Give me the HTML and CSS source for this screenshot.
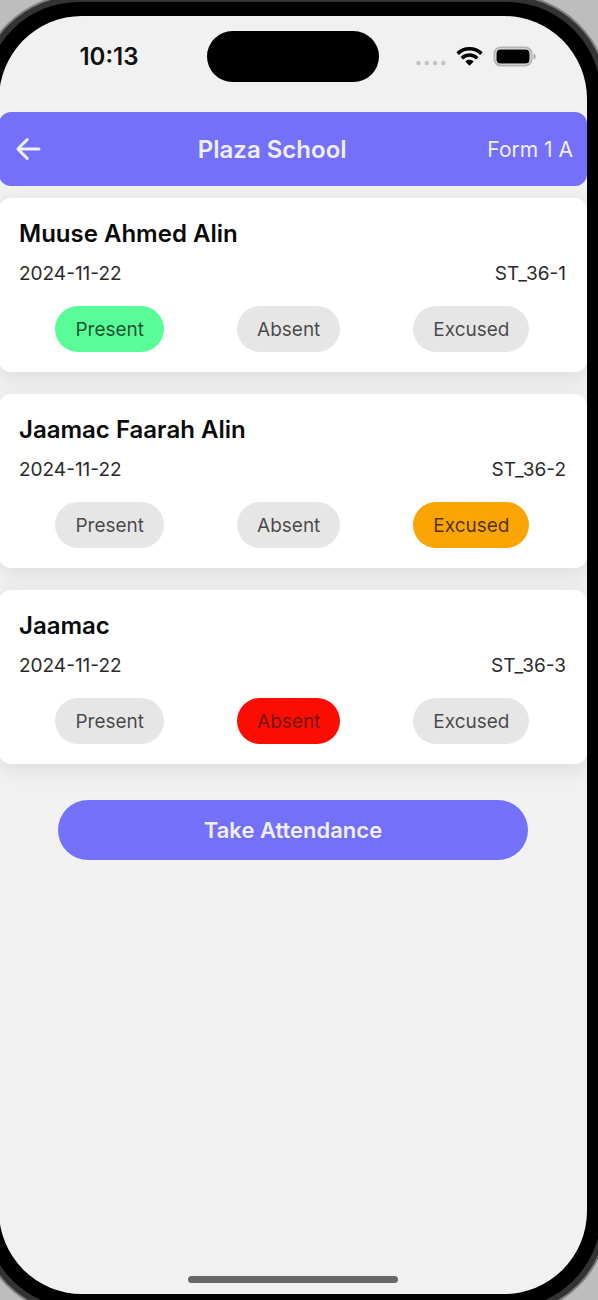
FILE: index.html
```html
<!DOCTYPE html>
<html lang="en">
<head>
<meta charset="utf-8">
<meta name="viewport" content="width=device-width, initial-scale=1">
<title>Plaza School</title>
<link rel="stylesheet" href="styles.css">
</head>
<body>
<div class="phone">
  <div class="screen">
    <div class="status">
      <time class="clock">10:13</time>
      <div class="island"></div>
      <div class="indicators">
        <svg width="30" height="22" viewBox="0 0 30 22" aria-hidden="true"><g fill="#c4c4c4"><circle cx="2.5" cy="17" r="2.3"/><circle cx="10.8" cy="17" r="2.3"/><circle cx="19" cy="17" r="2.3"/><circle cx="27.3" cy="17" r="2.3"/></g></svg>
        <svg width="27" height="22" viewBox="0 0 27 22" aria-hidden="true"><g fill="none" stroke="#000" stroke-width="3.6"><path d="M1.6 7.6C8.2 1.1 18.8 1.1 25.4 7.6"/><path d="M5.8 12.2C10.2 8 16.8 8 21.2 12.2"/></g><path d="M9.3 15.4c2.4-2.2 6-2.2 8.4 0L13.5 19.8z"/></svg>
        <svg width="44" height="22" viewBox="0 0 44 22" aria-hidden="true"><rect x="1.5" y="1.5" width="37" height="18" rx="6" fill="none" stroke="#b4b4b4" stroke-width="2"/><rect x="3.5" y="3.5" width="33" height="14" rx="4"/><path d="M40.5 7.5c3 1 3 5 0 6z" fill="#a8a8a8"/></svg>
      </div>
    </div>
    <header class="bar">
      <button class="back" type="button" aria-label="Back"><svg width="26" height="24" viewBox="0 0 26 24" aria-hidden="true"><path d="M24 12H3M12.2 2.6L2.8 12l9.4 9.4" fill="none" stroke="#f0efff" stroke-width="3" stroke-linecap="round" stroke-linejoin="round"/></svg></button>
      <h1 class="title">Plaza School</h1>
      <span class="form">Form 1 A</span>
    </header>
    <main class="list">
      <section class="card">
        <h2 class="name">Muuse Ahmed Alin</h2>
        <div class="meta"><time>2024-11-22</time><span>ST_36-1</span></div>
        <div class="choices"><button type="button" class="pill present">Present</button><button type="button" class="pill">Absent</button><button type="button" class="pill">Excused</button></div>
      </section>
      <section class="card">
        <h2 class="name">Jaamac Faarah Alin</h2>
        <div class="meta"><time>2024-11-22</time><span>ST_36-2</span></div>
        <div class="choices"><button type="button" class="pill">Present</button><button type="button" class="pill">Absent</button><button type="button" class="pill excused">Excused</button></div>
      </section>
      <section class="card">
        <h2 class="name">Jaamac</h2>
        <div class="meta"><time>2024-11-22</time><span>ST_36-3</span></div>
        <div class="choices"><button type="button" class="pill">Present</button><button type="button" class="pill absent">Absent</button><button type="button" class="pill">Excused</button></div>
      </section>
    </main>
    <button type="button" class="submit">Take Attendance</button>
    <div class="home"></div>
  </div>
</div>
</body>
</html>
```
FILE: styles.css
```css
* { box-sizing: border-box; }
body {
  margin: 0;
  overflow: hidden;
  background: #bdbdbd;
  font-family: Inter, "Liberation Sans", sans-serif;
}
h1, h2 { margin: 0; }
button {
  border: 0;
  padding: 0;
  font: inherit;
  cursor: pointer;
}
.phone {
  margin: -4px -9px -14px -21px;
  padding: 14px;
  min-height: calc(100vh + 18px);
  display: flex;
  background: #000;
  border: 6px solid #333;
  border-radius: 100px;
  box-shadow: 0 0 0 2px #808080;
}
.screen {
  flex: 1;
  display: flex;
  flex-direction: column;
  overflow: hidden;
  background: #f1f1f1;
  border-radius: 83px;
}
.status {
  display: grid;
  grid-template-columns: 1fr 172px 1fr;
  align-items: center;
  padding: 15px 0 30px;
}
.clock {
  padding-left: 12px;
  text-align: center;
  font-size: 24px;
  font-weight: 600;
  color: #111;
}
.island {
  height: 51px;
  border-radius: 26px;
  background: #000;
}
.indicators {
  display: flex;
  align-items: center;
  justify-content: flex-end;
  gap: 10px;
  padding-right: 50px;
}
.bar {
  display: flex;
  align-items: center;
  justify-content: space-between;
  height: 74px;
  padding-right: 14px;
  border-radius: 12px;
  background: #7570f9;
  color: #f0efff;
}
.back {
  display: flex;
  align-items: center;
  justify-content: center;
  width: 58px;
  height: 100%;
  background: none;
}
.title {
  font-size: 24px;
  font-weight: 600;
}
.form { font-size: 21px; }
.list {
  display: flex;
  flex-direction: column;
  gap: 22px;
  padding-top: 12px;
}
.card {
  padding: 21px 21px 20px 20px;
  border-radius: 12px;
  background: #fff;
  box-shadow: 0 5px 22px rgba(0, 0, 0, 0.09);
}
.name {
  font-size: 24px;
  font-weight: 600;
  line-height: 30px;
  color: #0a0a0a;
}
.meta {
  display: flex;
  justify-content: space-between;
  margin: 13px 0 20px;
  font-size: 19px;
  line-height: 24px;
  color: #2a2a2a;
}
.choices {
  display: flex;
  justify-content: space-around;
}
.pill {
  height: 46px;
  padding: 0 20px;
  border-radius: 23px;
  background: #e6e6e6;
  color: rgba(0, 0, 0, 0.7);
  font-size: 19px;
}
.present { background: #59fd98; }
.excused { background: #fba404; }
.absent {
  background: #fb0d04;
  color: #791713;
}
.submit {
  align-self: center;
  width: 80%;
  height: 60px;
  margin-top: 36px;
  border-radius: 30px;
  background: #7570f9;
  color: #f0efff;
  font-size: 22px;
  font-weight: 600;
}
.home {
  align-self: center;
  width: 210px;
  height: 7px;
  margin: auto 0 11px;
  border-radius: 4px;
  background: #686868;
}
```
